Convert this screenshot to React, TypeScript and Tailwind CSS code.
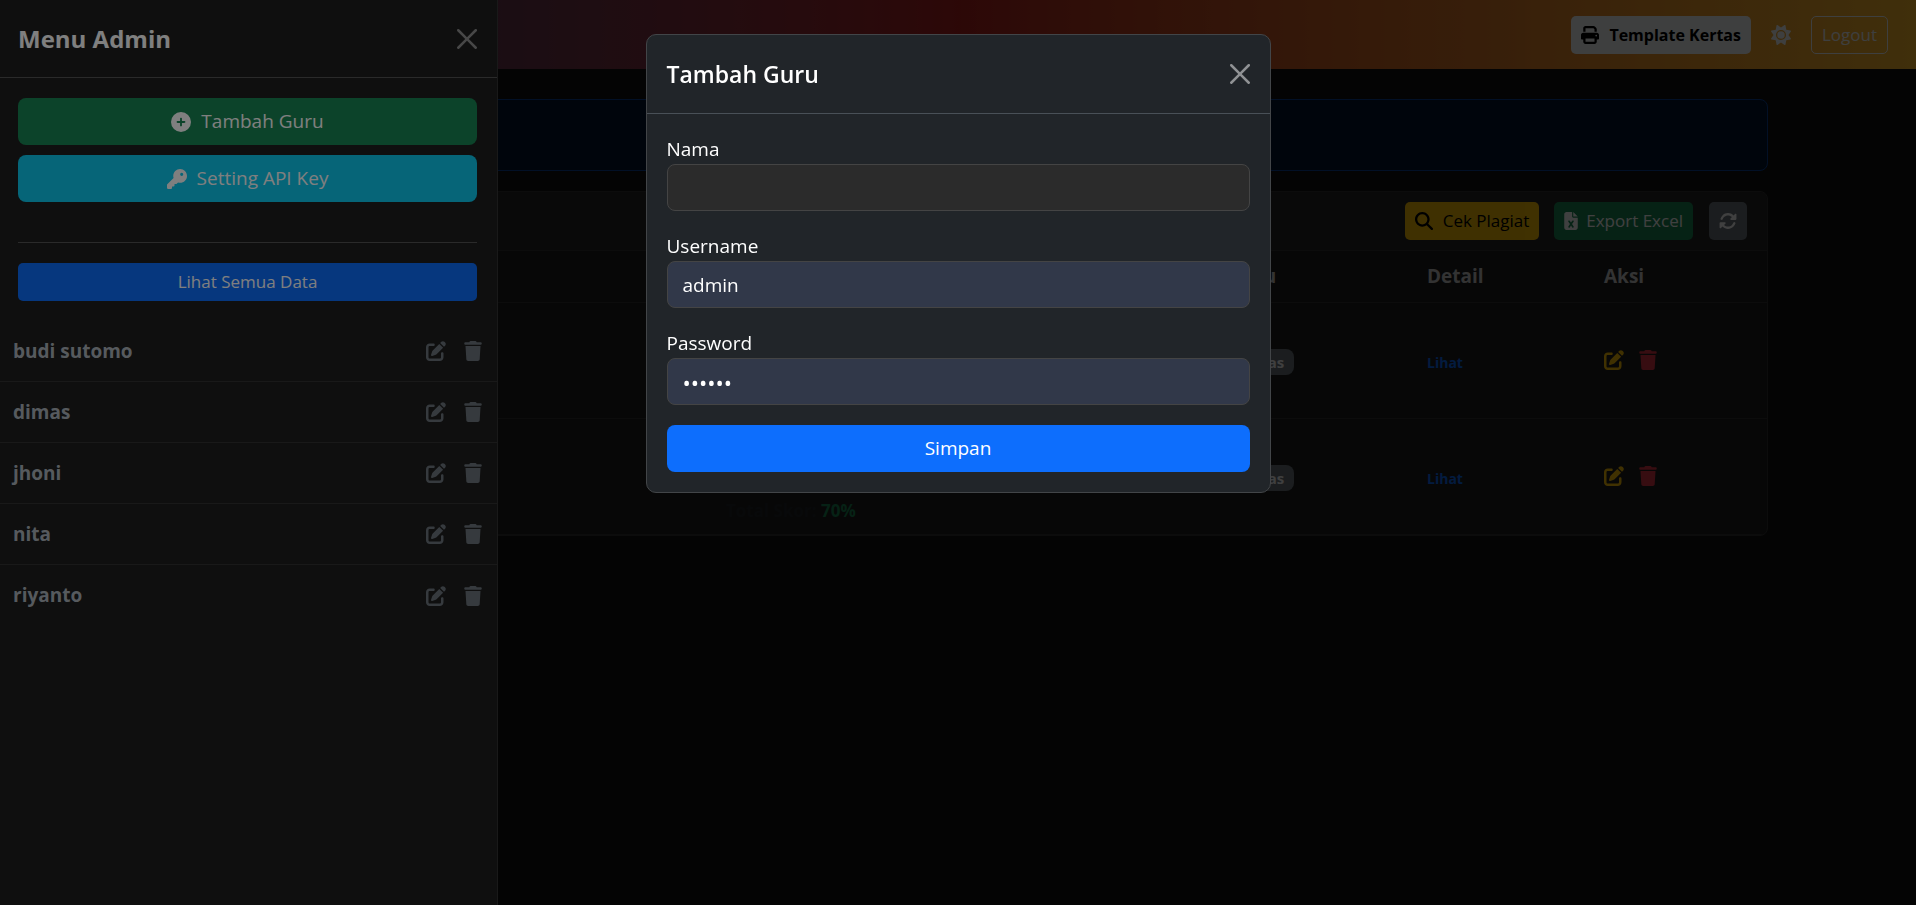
import { useState } from "react";
import {
    FaCirclePlus,
    FaFileExcel,
    FaKey,
    FaMagnifyingGlass,
    FaPenToSquare,
    FaPrint,
    FaRotate,
    FaSun,
    FaTrash,
} from "react-icons/fa6";

const teachers = ["budi sutomo", "dimas", "jhoni", "nita", "riyanto"];

const results = [
    { id: 1, teacher: "dimas", score: "70%" },
    { id: 2, teacher: "dimas", score: "70%" },
];

function CloseIcon() {
    return (
        <svg viewBox="0 0 16 16" className="size-5 fill-white" aria-hidden="true">
            <path d="M.293.293a1 1 0 0 1 1.414 0L8 6.586 14.293.293a1 1 0 1 1 1.414 1.414L9.414 8l6.293 6.293a1 1 0 0 1-1.414 1.414L8 9.414l-6.293 6.293a1 1 0 0 1-1.414-1.414L6.586 8 .293 1.707a1 1 0 0 1 0-1.414z" />
        </svg>
    );
}

function Navbar() {
    return (
        <header className="flex h-[69px] items-center justify-end gap-5 bg-linear-to-r from-[#1a2a6c] via-[#b21f1f] to-[#fdbb2d] pr-7">
            <button className="flex h-[38px] items-center gap-[10px] rounded-[5px] bg-[#f8f9fa] px-[10px] text-base font-bold text-black">
                <FaPrint className="size-[18px]" />
                Template Kertas
            </button>
            <button aria-label="Ganti tema" className="text-[#f8f9fa]">
                <FaSun className="size-5" />
            </button>
            <button className="h-[38px] rounded-[5px] border border-[#f8f9fa] px-[10px] text-[17px] text-[#f8f9fa]">
                Logout
            </button>
        </header>
    );
}

function ResultCard() {
    return (
        <section className="mt-5 overflow-hidden rounded-lg border border-[#333333] bg-[#1e1e1e]">
            <div className="flex h-[59px] items-center justify-end border-b border-[#333333] bg-[#252525] px-5">
                <button className="mr-[15px] flex h-[38px] items-center gap-[10px] rounded-[5px] bg-[#ffc107] px-[10px] text-[17px] text-black">
                    <FaMagnifyingGlass className="size-[18px]" />
                    Cek Plagiat
                </button>
                <button className="mr-4 flex h-[38px] items-center gap-2 rounded-[5px] bg-[#198754] px-[10px] text-[17px] text-white">
                    <FaFileExcel className="h-[18px] w-[14px]" />
                    Export Excel
                </button>
                <button aria-label="Muat ulang" className="flex h-[38px] items-center rounded-[5px] bg-[#6c757d] px-[10px] text-white">
                    <FaRotate className="size-[18px]" />
                </button>
            </div>
            <table className="w-full table-fixed text-left">
                <colgroup>
                    <col />
                    <col className="w-[503px]" />
                    <col className="w-[198px]" />
                    <col className="w-[177px]" />
                    <col className="w-[173px]" />
                </colgroup>
                <thead>
                    <tr className="h-[51px] border-b border-[#333333] text-[19px] text-[#cccccc]">
                        <th></th>
                        <th></th>
                        <th className="px-[10px]">Guru</th>
                        <th className="px-[10px]">Detail</th>
                        <th className="px-[10px]">Aksi</th>
                    </tr>
                </thead>
                <tbody>
                    {results.map((row) => (
                        <tr key={row.id} className="h-[116px] border-b border-[#333333]">
                            <td></td>
                            <td className="px-[10px] pb-[10px] align-bottom text-[17px] font-bold text-[#212529]">
                                Total Skor: <span className="text-[#198754]">{row.score}</span>
                            </td>
                            <td className="px-[10px] pt-1">
                                <span className="inline-block h-[26px] rounded-lg bg-[#6c757d] px-[10px] text-[15px] leading-[26px] font-bold text-white">
                                    {row.teacher}
                                </span>
                            </td>
                            <td className="px-[10px] pt-1">
                                <a href="#detail" className="text-sm font-bold text-[#0d6efd]">
                                    Lihat
                                </a>
                            </td>
                            <td className="px-[10px]">
                                <div className="flex items-center gap-[15px]">
                                    <button aria-label="Edit hasil" className="text-[#ffc107]">
                                        <FaPenToSquare className="size-5" />
                                    </button>
                                    <button aria-label="Hapus hasil" className="text-[#dc3545]">
                                        <FaTrash className="h-5 w-[18px]" />
                                    </button>
                                </div>
                            </td>
                        </tr>
                    ))}
                </tbody>
            </table>
        </section>
    );
}

function AdminMenu() {
    return (
        <aside className="fixed inset-y-0 left-0 w-[498px] border-r border-[#333333] bg-[#1e1e1e] text-white">
            <div className="flex h-[78px] items-center justify-between border-b border-[#555555] pr-5 pl-[18px]">
                <h2 className="text-2xl font-bold">Menu Admin</h2>
                <button aria-label="Tutup menu" className="opacity-50">
                    <CloseIcon />
                </button>
            </div>
            <div className="flex flex-col pt-5 pr-5 pl-[18px]">
                <button className="flex h-[47px] items-center justify-center gap-[10px] rounded-lg bg-[#198754] text-[19px]">
                    <FaCirclePlus className="size-5" />
                    Tambah Guru
                </button>
                <button className="mt-[10px] flex h-[47px] items-center justify-center gap-[10px] rounded-lg bg-[#0dcaf0] text-[19px]">
                    <FaKey className="size-5" />
                    Setting API Key
                </button>
                <hr className="mt-10 border-[#555555]" />
                <button className="mt-5 h-[38px] rounded-[5px] bg-[#0d6efd] text-[17px]">Lihat Semua Data</button>
            </div>
            <ul className="mt-5 divide-y divide-[#333333]">
                {teachers.map((name) => (
                    <li key={name} className="flex h-[61px] items-center pr-[15px] pl-[13px]">
                        <span className="flex-1 text-[19px] font-bold text-[#adb5bd]">{name}</span>
                        <button aria-label={`Edit ${name}`} className="mr-[18px] text-[#6c757d]">
                            <FaPenToSquare className="size-5" />
                        </button>
                        <button aria-label={`Hapus ${name}`} className="text-[#6c757d]">
                            <FaTrash className="h-5 w-[18px]" />
                        </button>
                    </li>
                ))}
            </ul>
        </aside>
    );
}

function Field({ id, label, type = "text", initial = "" }: { id: string; label: string; type?: string; initial?: string }) {
    const [value, setValue] = useState(initial);

    return (
        <div className="mb-5">
            <label htmlFor={id} className="block text-[19px] leading-[30px]">
                {label}
            </label>
            <input
                id={id}
                type={type}
                value={value}
                onChange={(e) => setValue(e.target.value)}
                className={`block h-[47px] w-full rounded-lg border border-[#444444] px-[15px] text-white ${
                    initial ? "bg-[#313849]" : "bg-[#2b2b2b]"
                } ${type === "password" ? "text-[22px]" : "text-[19px]"}`}
            />
        </div>
    );
}

function AddTeacherModal() {
    return (
        <div className="fixed inset-0 flex items-start justify-center bg-black/50 pt-[34px]">
            <div role="dialog" aria-labelledby="modal-title" className="w-full max-w-[625px] rounded-[10px] border border-[#424548] bg-[#212529] text-white">
                <div className="flex h-[79px] items-center justify-between border-b border-[#495057] px-5">
                    <h2 id="modal-title" className="text-[23px] font-semibold">
                        Tambah Guru
                    </h2>
                    <button aria-label="Tutup" className="opacity-50">
                        <CloseIcon />
                    </button>
                </div>
                <form className="p-5" onSubmit={(e) => e.preventDefault()}>
                    <Field id="nama" label="Nama" />
                    <Field id="username" label="Username" initial="admin" />
                    <Field id="password" label="Password" type="password" initial="secret" />
                    <button type="submit" className="h-[47px] w-full rounded-lg bg-[#0d6efd] text-[19px]">
                        Simpan
                    </button>
                </form>
            </div>
        </div>
    );
}

export default function App() {
    return (
        <div className="min-h-screen bg-[#121212] font-['Open_Sans','Noto_Sans',sans-serif]">
            <Navbar />
            <main className="mx-auto max-w-[1620px] pt-[30px]">
                <div className="h-[72px] rounded-lg border border-[#084298] bg-[#031633]"></div>
                <ResultCard />
            </main>

            {/* Backdrop behind the side menu */}
            <div className="fixed inset-0 bg-black/50"></div>
            <AdminMenu />
            <AddTeacherModal />
        </div>
    );
}
